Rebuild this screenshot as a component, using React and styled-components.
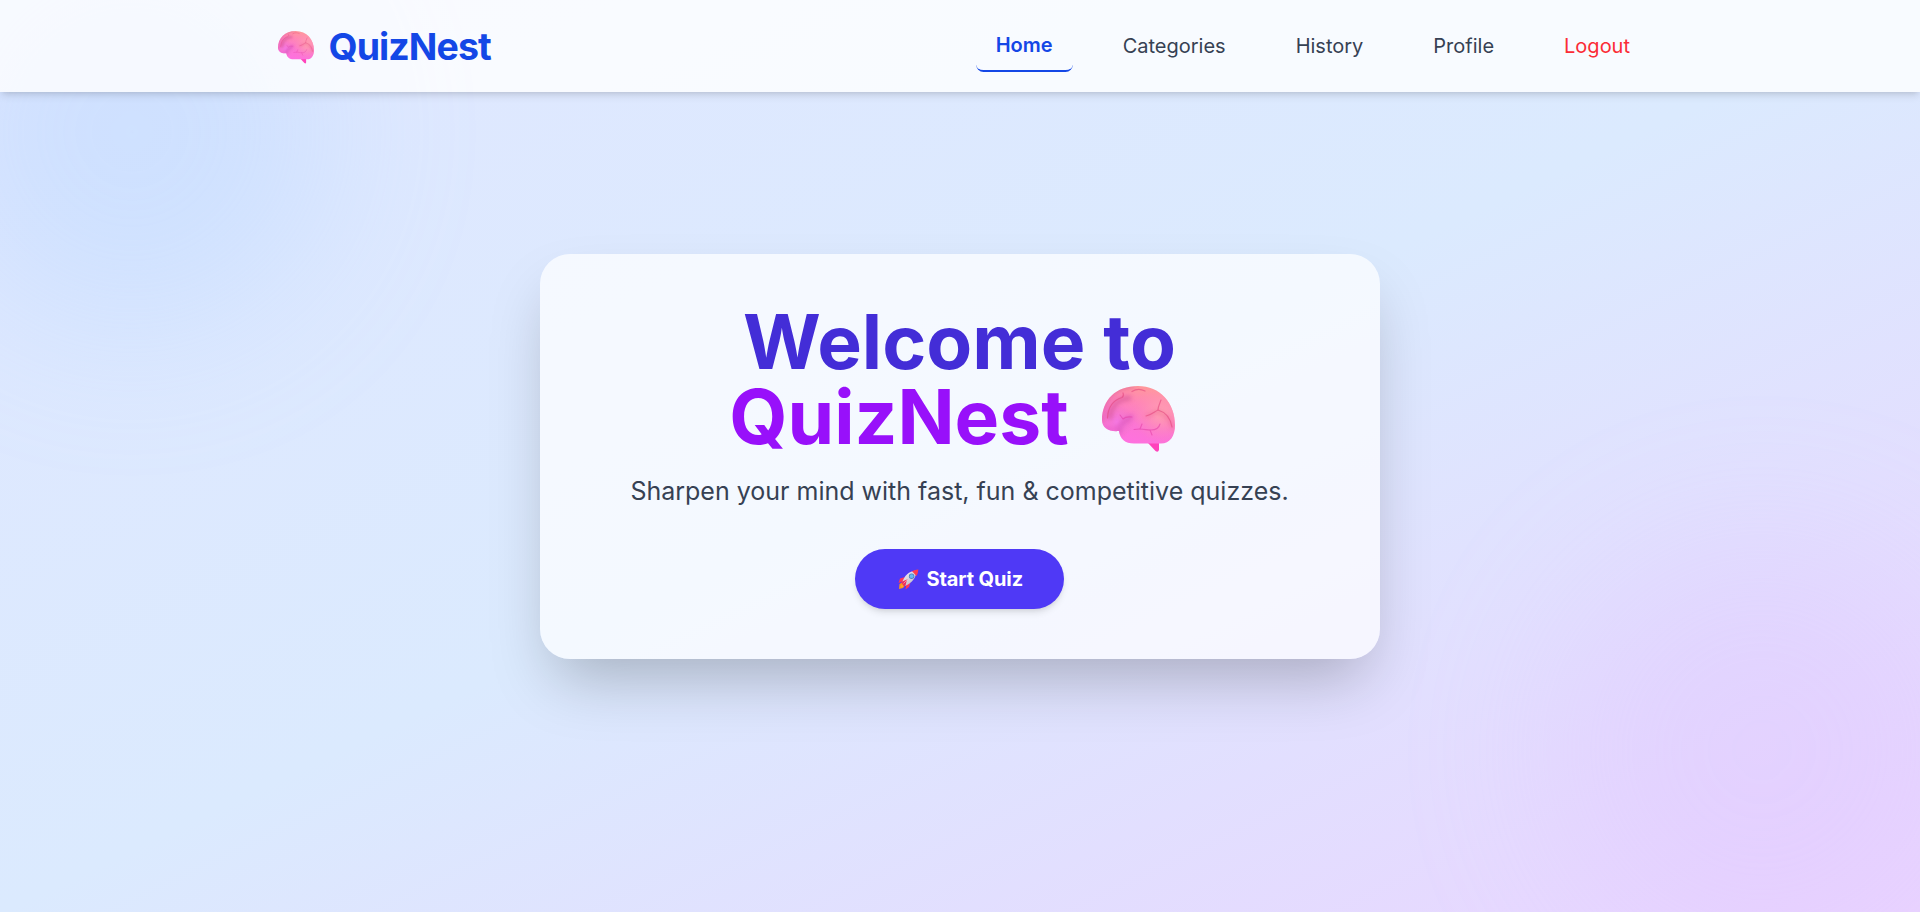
import React from 'react';
import styled, { createGlobalStyle } from 'styled-components';

const GlobalStyle = createGlobalStyle`
  *, *::before, *::after { box-sizing: border-box; }
  body {
    margin: 0;
    font-family: Inter, "Liberation Sans", sans-serif;
  }
  h1, p { margin: 0; }
`;

const Page = styled.div`
  position: relative;
  display: flex;
  flex-direction: column;
  height: 912px;
  overflow: hidden;
  background: linear-gradient(to bottom right, #e0e7ff, #dbeafe, #e9d4ff);
`;

const Blob = styled.div`
  position: absolute;
  border-radius: 50%;
  filter: blur(80px);
  opacity: 0.2;
`;

const BlueBlob = styled(Blob)`
  top: -68px;
  left: -68px;
  width: 400px;
  height: 400px;
  background: #8ec5ff;
`;

const PurpleBlob = styled(Blob)`
  right: -52px;
  bottom: -48px;
  width: 420px;
  height: 420px;
  background: #dab2ff;
`;

const Header = styled.header`
  position: relative;
  flex: none;
  height: 92px;
  background: rgba(255, 255, 255, 0.8);
  box-shadow: 0 5px 7.5px -1.25px rgba(0, 0, 0, 0.1), 0 2.5px 5px -2.5px rgba(0, 0, 0, 0.1);
`;

const HeaderInner = styled.div`
  display: flex;
  align-items: center;
  justify-content: space-between;
  width: 1440px;
  height: 100%;
  margin: 0 auto;
  padding: 0 30px;
`;

const Logo = styled.a`
  display: flex;
  align-items: center;
  padding-left: 8px;
  color: #1447e6;
  font-size: 37.5px;
  font-weight: 700;
  line-height: 45px;
  letter-spacing: -0.9375px;
`;

const LogoText = styled.span`
  margin-left: 14.5px;
`;

const Nav = styled.nav`
  display: flex;
  align-items: center;
  gap: 30px;
`;

const NavLink = styled.a`
  padding: 10px 20px;
  border-radius: 7.5px;
  border-bottom: ${(p) => (p.$active ? '2px solid #1447e6' : 'none')};
  color: ${(p) => (p.$danger ? '#fb2c36' : p.$active ? '#1447e6' : '#364153')};
  font-size: 20px;
  font-weight: ${(p) => (p.$active ? 600 : 400)};
  line-height: 30px;
`;

const Main = styled.main`
  position: relative;
  flex: 1;
  display: flex;
  align-items: flex-start;
  justify-content: center;
  padding-top: 162px;
`;

const Card = styled.section`
  display: flex;
  flex-direction: column;
  align-items: center;
  width: 840px;
  height: 405px;
  padding: 50px 51px 50px 50px;
  border-radius: 30px;
  background: rgba(255, 255, 255, 0.7);
  box-shadow: 0 31.25px 62.5px -15px rgba(0, 0, 0, 0.25);
`;

const Title = styled.h1`
  display: flex;
  flex-direction: column;
  align-items: center;
  color: #432dd7;
  font-size: 75px;
  font-weight: 700;
  line-height: 75px;
`;

const TitleBrand = styled.span`
  display: flex;
  align-items: center;
  gap: 33px;
  padding-right: 15px;
  color: #9810fa;
`;

const Subtitle = styled.p`
  margin: 20px 0 40px;
  color: #364153;
  font-size: 25px;
  line-height: 35px;
`;

const StartButton = styled.button`
  display: flex;
  align-items: center;
  justify-content: center;
  gap: 7.5px;
  width: 209px;
  height: 60px;
  padding: 0 0 0 2px;
  border: 0;
  border-radius: 30px;
  background: #4f39f6;
  color: #fff;
  font: 700 20px/30px Inter, "Liberation Sans", sans-serif;
  letter-spacing: -0.1px;
  box-shadow: 0 5px 7.5px -1.25px rgba(0, 0, 0, 0.1), 0 2.5px 5px -2.5px rgba(0, 0, 0, 0.1);
`;

const Icon = styled.svg`
  flex: none;
  display: block;
  margin-top: ${(p) => p.$drop || 0}px;
`;

function Brain({ id, width, drop }) {
  const fill = `${id}-fill`;
  const glow = `${id}-glow`;
  const shade = `${id}-shade`;
  const clip = `${id}-clip`;
  const blur = `${id}-blur`;
  const shape =
    'M0 34C0 14 14 0 36 0C58 0 73 17 73 39C73 50 68 57.500 59 57.500H32C23 57.500 18 53 17 45C7 46 0 42 0 34Z';
  return (
    <Icon $drop={drop} width={width} height={(width * 66) / 73} viewBox="0 0 73 66" aria-hidden="true">
      <defs>
        <linearGradient id={fill} x1="45" y1="0" x2="28" y2="58" gradientUnits="userSpaceOnUse">
          <stop offset="0" stopColor="#ff9a98" />
          <stop offset="0.3" stopColor="#ff86b6" />
          <stop offset="0.65" stopColor="#fb76d2" />
          <stop offset="1" stopColor="#ff70e0" />
        </linearGradient>
        <radialGradient id={glow} cx="59" cy="27" r="29" gradientUnits="userSpaceOnUse">
          <stop offset="0" stopColor="#ffa2b2" />
          <stop offset="1" stopColor="#ff88b8" stopOpacity="0" />
        </radialGradient>
        <radialGradient id={shade} cx="15" cy="36" r="17" gradientUnits="userSpaceOnUse">
          <stop offset="0" stopColor="#f67ae4" />
          <stop offset="1" stopColor="#ec70c0" stopOpacity="0" />
        </radialGradient>
        <clipPath id={clip}>
          <path d={shape} />
        </clipPath>
        <filter id={blur} x="-30%" y="-30%" width="160%" height="160%">
          <feGaussianBlur stdDeviation="2" />
        </filter>
      </defs>
      <path d="M46 57H57V64Q56 67 53.500 65Z" fill="#ff43bb" />
      <path d={shape} fill={`url(#${fill})`} />
      <path d={shape} fill={`url(#${glow})`} />
      <path d={shape} fill={`url(#${shade})`} />
      <g clipPath={`url(#${clip})`} fill="none" strokeLinecap="round" strokeLinejoin="round">
        <g filter={`url(#${blur})`} opacity="0.65">
          <path d="M0 36C-1 14 14 1 31 0" stroke="#d85c91" strokeWidth="3" />
          <path d="M8 31C9 20 16 13 27 12" stroke="#d65898" strokeWidth="5" />
          <path d="M17 46C18 34 25 36 29 31" stroke="#d957bc" strokeWidth="5" />
          <path d="M2 42C10 45 15 43 18 38" stroke="#e55dca" strokeWidth="3" />
          <path d="M45 30L56 25L66 32L71 42" stroke="#ee6a98" strokeWidth="3" />
        </g>
        <g stroke="#e3487f" strokeWidth="1.2" opacity="0.6">
          <path d="M5.500 32C6 20 12 14 20 11.500C22 10 22 9 21 7" />
          <path d="M30 5.500C34 3 39 3 43 5" />
          <path d="M44 30C49 29 52 26 56 24C56 20 58 17 59 14" />
          <path d="M56 24C63 26 68 30 70 41" />
        </g>
        <g stroke="#e33ca6" strokeWidth="1.1" opacity="0.55">
          <path d="M18 29L21 33C24 30 27 31 30 31" />
          <path d="M32 43.500C42 42 44 44.500 49 44C54 44 57 42 58 38" />
          <path d="M38 43L40 38" />
          <path d="M48 44L50 49" />
        </g>
      </g>
    </Icon>
  );
}

function Rocket() {
  return (
    <Icon width="21" height="21" viewBox="0 0 21 21" aria-hidden="true">
      <defs>
        <linearGradient id="rocket-body" x1="7" y1="4" x2="14" y2="13" gradientUnits="userSpaceOnUse">
          <stop offset="0" stopColor="#f0e8f0" />
          <stop offset="1" stopColor="#c7c4d2" />
        </linearGradient>
      </defs>
      <path d="M1 20L1.500 15L4 13.500L7 16.500L5 19Z" fill="#ff9418" />
      <path d="M2.500 18.500L3 16L5 15L6 16L4.500 18Z" fill="#ffa42d" />
      <path d="M7 8L2 9.500L.500 14L5.500 12ZM12.500 13.500L11 18L7.500 20.500L8.500 15Z" fill="#ff3657" />
      <path d="M4 14C6 7 11 2 18 1.500C19 8 14 14 7 17Z" fill="url(#rocket-body)" />
      <path d="M14 2.200Q17 .500 20.300.500Q20.300 4 18.500 7Z" fill="#ff3b50" />
      <circle cx="13.600" cy="7.200" r="2.700" fill="#4f7fbd" />
      <circle cx="13.600" cy="7.200" r="1.900" fill="#66b8f6" />
      <path d="M3 13L9 10.500L7.500 16.500L6 17.500Z" fill="#ec315c" />
      <path d="M5.500 14.500L9.500 10.500" stroke="#ff8594" strokeWidth="1" />
    </Icon>
  );
}

const LINKS = [
  { label: 'Home', active: true },
  { label: 'Categories' },
  { label: 'History' },
  { label: 'Profile' },
  { label: 'Logout', danger: true },
];

export default function App() {
  return (
    <Page>
      <GlobalStyle />
      <BlueBlob />
      <PurpleBlob />
      <Header>
        <HeaderInner>
          <Logo>
            <Brain id="logo-brain" width={36} drop={3} />
            <LogoText>QuizNest</LogoText>
          </Logo>
          <Nav>
            {LINKS.map((link) => (
              <NavLink key={link.label} $active={link.active} $danger={link.danger}>
                {link.label}
              </NavLink>
            ))}
          </Nav>
        </HeaderInner>
      </Header>
      <Main>
        <Card>
          <Title>
            <span>Welcome to</span>
            <TitleBrand>
              <span>QuizNest</span>
              <Brain id="title-brain" width={73} drop={4} />
            </TitleBrand>
          </Title>
          <Subtitle>Sharpen your mind with fast, fun &amp; competitive quizzes.</Subtitle>
          <StartButton>
            <Rocket />
            <span>Start Quiz</span>
          </StartButton>
        </Card>
      </Main>
    </Page>
  );
}
